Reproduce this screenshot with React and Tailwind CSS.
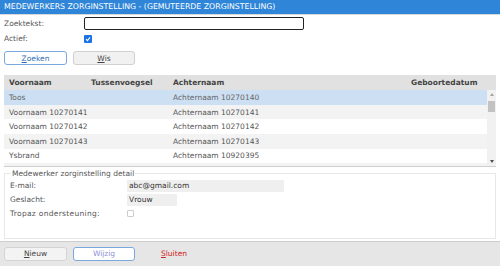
import React from 'react'

const rows = [
  { voor: 'Toos', tussen: '', achter: 'Achternaam 10270140', geb: '' },
  { voor: 'Voornaam 10270141', tussen: '', achter: 'Achternaam 10270141', geb: '' },
  { voor: 'Voornaam 10270142', tussen: '', achter: 'Achternaam 10270142', geb: '' },
  { voor: 'Voornaam 10270143', tussen: '', achter: 'Achternaam 10270143', geb: '' },
  { voor: 'Ysbrand', tussen: '', achter: 'Achternaam 10920395', geb: '' },
  { voor: 'Voornaam 10920396', tussen: '', achter: 'Achternaam 10920396', geb: '' },
]

const rowBg = (i) => (i === 0 ? 'bg-[#cddff2] text-[#666]' : i % 2 === 1 ? 'bg-[#f3f3f3]' : 'bg-white')

export default function App() {
  return (
    <div className="flex h-[266px] w-[500px] flex-col overflow-hidden whitespace-nowrap bg-white text-[7.5px] text-[#555] [font-family:'DejaVu_Sans',Verdana,sans-serif]">
      <div className="flex h-[14px] items-center bg-[#2f86d8] px-[4px] text-[7.8px] text-white">
        MEDEWERKERS ZORGINSTELLING - (GEMUTEERDE ZORGINSTELLING)
      </div>
      <div className="h-px bg-[#d8d8d8]" />

      <div className="grid grid-cols-[80px_1fr] items-center gap-y-[3px] px-[4px] pt-[2px]">
        <span>Zoektekst:</span>
        <div className="h-[13px] w-[220px] rounded-[2px] border border-[#222] bg-white" />
        <span>Actief:</span>
        <span className="flex h-[8px] w-[8px] items-center justify-center rounded-[1px] bg-[#1a73e8]">
          <svg width="6" height="6" viewBox="0 0 6 6" fill="none">
            <path d="M1 3.2 L2.4 4.6 L5 1.4" stroke="white" strokeWidth="1.1" />
          </svg>
        </span>
      </div>

      <div className="flex gap-[6px] px-[4px] pt-[7px]">
        <button className="h-[14px] w-[63px] rounded-[3px] border border-[#7aa7dc] bg-white text-[7.5px] text-[#2f6db5]">
          <span className="underline">Z</span>oeken
        </button>
        <button className="h-[14px] w-[62px] rounded-[3px] border border-[#d0d0d0] bg-[#f1f1f1] text-[7.5px] text-[#444]">
          <span className="underline">W</span>is
        </button>
      </div>

      <div className="mx-[4px] mt-[10px] flex h-[91px] flex-col overflow-hidden">
        <div className="grid h-[15px] shrink-0 grid-cols-[82px_82px_238px_1fr] items-center bg-[#e1e1e1] pl-[5px] font-bold text-[#444]">
          <span>Voornaam</span>
          <span>Tussenvoegsel</span>
          <span>Achternaam</span>
          <span>Geboortedatum</span>
        </div>
        <div className="flex min-h-0 flex-1">
          <div className="flex-1 overflow-hidden">
            {rows.map((r, i) => (
              <div
                key={r.achter}
                className={`grid h-[14.6px] grid-cols-[82px_82px_238px_1fr] items-center pl-[5px] ${rowBg(i)}`}
              >
                <span>{r.voor}</span>
                <span>{r.tussen}</span>
                <span>{r.achter}</span>
                <span>{r.geb}</span>
              </div>
            ))}
          </div>
          <div className="flex w-[9px] flex-col items-center bg-[#f1f1f1]">
            <span className="mt-[3px] h-0 w-0 border-x-[2.5px] border-b-[3px] border-x-transparent border-b-[#a3a3a3]" />
            <span className="mt-[5px] h-[11px] w-[7px] bg-[#c2c2c2]" />
            <span className="flex-1" />
            <span className="mb-[3px] h-0 w-0 border-x-[2.5px] border-t-[3px] border-x-transparent border-t-[#505050]" />
          </div>
        </div>
      </div>
      <div className="mx-[4px] h-px bg-[#cfcfcf]" />

      <fieldset className="mx-[4px] mt-[1px] h-[71px] border border-[#e8e8e8] px-[5px] pb-0">
        <legend className="ml-[1px] px-[1px] text-[#555]">Medewerker zorginstelling detail</legend>
        <div className="grid grid-cols-[117px_1fr] items-center gap-y-[2px]">
          <span>E-mail:</span>
          <div className="flex h-[12px] w-[157px] items-center bg-[#efefef] px-[2px] text-[#333]">abc@gmail.com</div>
          <span>Geslacht:</span>
          <div className="flex h-[12px] w-[50px] items-center bg-[#efefef] px-[2px] text-[#333]">Vrouw</div>
          <span className="tracking-[0.3px]">Tropaz ondersteuning:</span>
          <span className="h-[7px] w-[7px] rounded-[1px] border border-[#ccc] bg-white" />
        </div>
      </fieldset>

      <div className="mt-auto flex h-[25px] items-center gap-[6px] border-t border-[#cdcdcd] bg-[#e6e6e6] px-[4px]">
        <button className="h-[14px] w-[63px] rounded-[3px] border border-[#d4d4d4] bg-[#f3f3f3] text-[7.5px] text-[#444]">
          <span className="underline">N</span>ieuw
        </button>
        <button className="h-[14px] w-[62px] rounded-[3px] border border-[#7aa7dc] bg-white text-[7.5px] text-[#8f8fd8]">
          Wijzig
        </button>
        <button className="ml-[20px] text-[7.5px] text-[#d02020]">
          <span className="underline">S</span>luiten
        </button>
      </div>
    </div>
  )
}
